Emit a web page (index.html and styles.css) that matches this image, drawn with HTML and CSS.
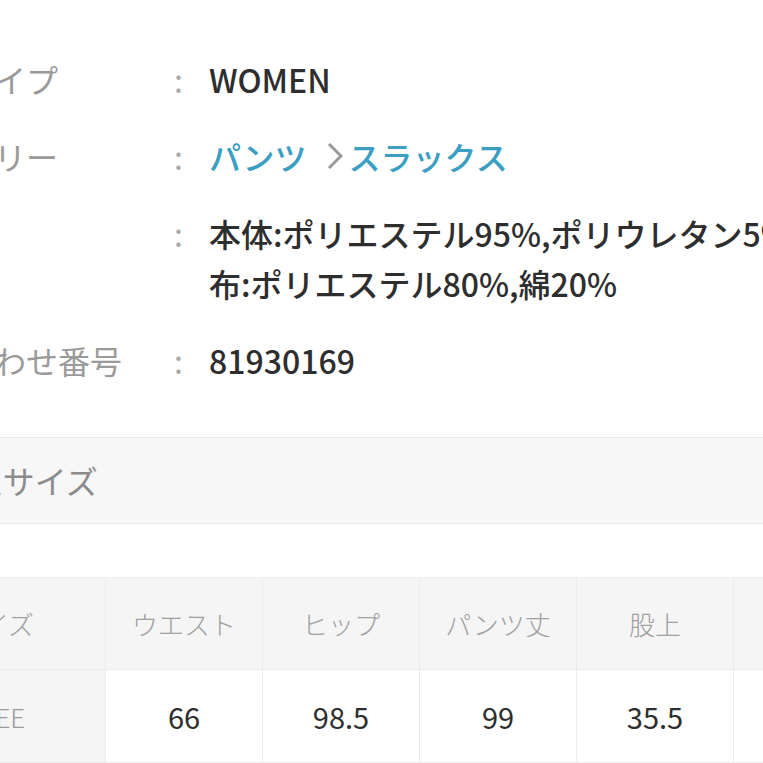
FILE: index.html
```html
<!DOCTYPE html>
<html lang="ja">
<head>
<meta charset="utf-8">
<title>商品詳細</title>
<link rel="stylesheet" href="styles.css">
</head>
<body>
<div class="page">
  <dl class="spec">
    <div class="row">
      <dt class="label">商品タイプ</dt>
      <span class="colon">:</span>
      <dd class="value">WOMEN</dd>
    </div>
    <div class="row">
      <dt class="label">カテゴリー</dt>
      <span class="colon">:</span>
      <dd class="value crumbs">
        <a class="link" href="#">パンツ</a>
        <svg class="chev" width="16" height="28" viewBox="0 0 16 28"><polyline points="2,2 14,14 2,26" fill="none" stroke="#9a9a9a" stroke-width="3"/></svg>
        <a class="link" href="#">スラックス</a>
      </dd>
    </div>
    <div class="row">
      <dt class="label">素材</dt>
      <span class="colon">:</span>
      <dd class="value">本体:ポリエステル95%,ポリウレタン5%<br>布:ポリエステル80%,綿20%</dd>
    </div>
    <div class="row">
      <dt class="label">問い合わせ番号</dt>
      <span class="colon">:</span>
      <dd class="value">81930169</dd>
    </div>
  </dl>

  <div class="section-bar">アイテムサイズ</div>

  <table class="size">
    <colgroup>
      <col class="c-first">
      <col class="c-col">
      <col class="c-col">
      <col class="c-col">
      <col class="c-col">
      <col class="c-col">
    </colgroup>
    <thead>
      <tr>
        <th class="first">サイズ</th>
        <th>ウエスト</th>
        <th>ヒップ</th>
        <th>パンツ丈</th>
        <th>股上</th>
        <th>裾幅</th>
      </tr>
    </thead>
    <tbody>
      <tr>
        <th class="first">FREE</th>
        <td>66</td>
        <td>98.5</td>
        <td>99</td>
        <td>35.5</td>
        <td>21</td>
      </tr>
    </tbody>
  </table>
</div>
</body>
</html>
```

FILE: styles.css
```css
html, body {
  margin: 0;
  padding: 0;
  background: #ffffff;
  overflow: hidden;
}

body {
  font-family: "Noto Sans CJK JP", "Noto Sans", sans-serif;
  color: #333333;
}

.page {
  margin-left: -130px;
  width: 1200px;
  padding-top: 54px;
}

.spec {
  margin: 0;
  padding-left: 28px;
  display: flex;
  flex-direction: column;
  gap: 27px;
}

.row {
  display: grid;
  grid-template-columns: 274px 37px 1fr;
  font-size: 32px;
  line-height: 50px;
}

.label {
  color: #9a9a9a;
  white-space: nowrap;
}

.colon {
  color: #a8a8a8;
  padding-left: 2px;
}

.value {
  margin: 0;
  font-weight: 500;
  color: #2e2e2e;
  white-space: nowrap;
}

.crumbs {
  display: flex;
  align-items: center;
}

.link {
  color: #3a9fc2;
  text-decoration: none;
}

.chev {
  margin: 0 6px 0 20px;
}

.section-bar {
  margin-top: 52px;
  height: 85px;
  line-height: 85px;
  background: #f7f7f7;
  border-top: 1px solid #e9e9e9;
  border-bottom: 1px solid #e9e9e9;
  padding-left: 8px;
  font-size: 32px;
  color: #8c8c8c;
}

.size {
  margin-top: 53px;
  margin-left: 15px;
  border-collapse: collapse;
  table-layout: fixed;
  width: 1005px;
}

.c-first {
  width: 220px;
}

.c-col {
  width: 157px;
}

.size th,
.size td {
  text-align: center;
  border: 1px solid #ececec;
  padding: 0;
}

.size .first {
  background: #f5f5f5;
}

.size thead th {
  height: 91px;
  background: #f5f5f5;
  font-size: 26px;
  font-weight: 300;
  color: #a0a0a0;
}

.size tbody th {
  height: 92px;
  font-size: 26px;
  font-weight: 300;
  color: #9a9a9a;
}

.size tbody td {
  font-size: 29px;
  color: #2e2e2e;
  background: #ffffff;
}
```
